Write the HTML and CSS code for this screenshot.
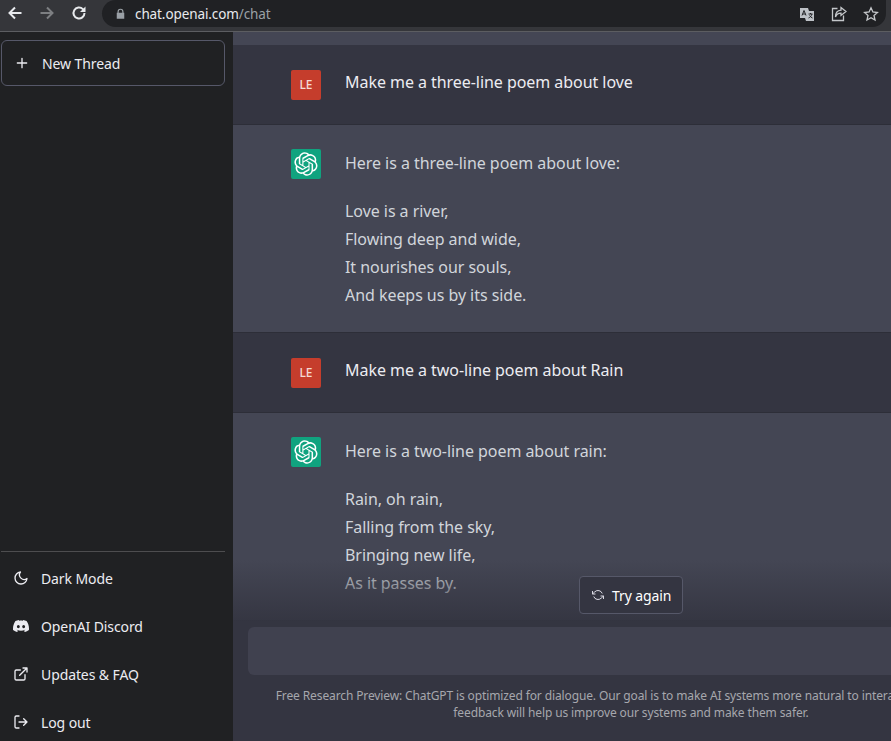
FILE: index.html
```html
<!doctype html>
<html>
	<head>
		<meta charset="utf-8" />
		<title>chat.openai.com/chat</title>
		<link rel="stylesheet" href="styles.css">
	</head>
	<body>
		<svg class="defs" width="0" height="0">
			<symbol id="gpt" viewBox="0 0 41 41"><path fill="currentColor" d="M37.5324 16.8707C37.9808 15.5241 38.1363 14.0974 37.9886 12.6859C37.8409 11.2744 37.3934 9.91076 36.676 8.68622C35.6126 6.83404 33.9882 5.3676 32.0373 4.4985C30.0864 3.62941 27.9098 3.40259 25.8215 3.85078C24.8796 2.7893 23.7219 1.94125 22.4257 1.36341C21.1295 0.785575 19.7249 0.491269 18.3058 0.500197C16.1708 0.495044 14.0893 1.16803 12.3614 2.42214C10.6335 3.67624 9.34853 5.44666 8.6917 7.47815C7.30085 7.76286 5.98686 8.3414 4.8377 9.17505C3.68854 10.0087 2.73073 11.0782 2.02839 12.312C0.956464 14.1591 0.498905 16.2988 0.721698 18.4228C0.944492 20.5467 1.83612 22.5449 3.268 24.1293C2.81966 25.4759 2.66413 26.9026 2.81182 28.3141C2.95951 29.7256 3.40701 31.0892 4.12437 32.3138C5.18791 34.1659 6.8123 35.6322 8.76321 36.5013C10.7141 37.3704 12.8907 37.5973 14.9789 37.1492C15.9208 38.2107 17.0786 39.0587 18.3747 39.6366C19.6709 40.2144 21.0755 40.5087 22.4946 40.4998C24.6307 40.5054 26.7133 39.8321 28.4418 38.5772C30.1704 37.3223 31.4556 35.5506 32.1119 33.5179C33.5027 33.2332 34.8167 32.6547 35.9659 31.821C37.115 30.9874 38.0728 29.9178 38.7752 28.684C39.8458 26.8371 40.3023 24.6979 40.0789 22.5748C39.8556 20.4517 38.9639 18.4544 37.5324 16.8707ZM22.4978 37.8849C20.7443 37.8874 19.0459 37.2733 17.6994 36.1501C17.7601 36.117 17.8666 36.0586 17.936 36.0161L25.9004 31.4156C26.1003 31.3019 26.2663 31.137 26.3813 30.9378C26.4964 30.7386 26.5563 30.5124 26.5549 30.2825V19.0542L29.9213 20.998C29.9389 21.0068 29.9541 21.0198 29.9656 21.0359C29.977 21.052 29.9842 21.0707 29.9867 21.0902V30.3889C29.9842 32.375 29.1946 34.2791 27.7909 35.6841C26.3872 37.0892 24.4838 37.8806 22.4978 37.8849ZM6.39227 31.0064C5.51397 29.4888 5.19742 27.7107 5.49804 25.9832C5.55718 26.0187 5.66048 26.0818 5.73461 26.1244L13.699 30.7248C13.8975 30.8408 14.1233 30.902 14.3532 30.902C14.583 30.902 14.8088 30.8408 15.0073 30.7248L24.731 25.1103V28.9979C24.7321 29.0177 24.7283 29.0376 24.7199 29.0556C24.7115 29.0736 24.6988 29.0893 24.6829 29.1012L16.6317 33.7497C14.9096 34.7416 12.8643 35.0097 10.9447 34.4954C9.02506 33.9811 7.38785 32.7263 6.39227 31.0064ZM4.29707 13.6194C5.17156 12.0998 6.55279 10.9364 8.19885 10.3327C8.19885 10.4013 8.19491 10.5228 8.19491 10.6071V19.808C8.19351 20.0378 8.25334 20.2638 8.36823 20.4629C8.48312 20.6619 8.64893 20.8267 8.84863 20.9404L18.5723 26.5542L15.206 28.4979C15.1894 28.5089 15.1703 28.5155 15.1505 28.5173C15.1307 28.5191 15.1107 28.516 15.0924 28.5082L7.04046 23.8557C5.32135 22.8601 4.06716 21.2235 3.55289 19.3046C3.03862 17.3858 3.30624 15.3413 4.29707 13.6194ZM31.955 20.0556L22.2312 14.4411L25.5976 12.4981C25.6142 12.4872 25.6333 12.4805 25.6531 12.4787C25.6729 12.4769 25.6928 12.4801 25.7111 12.4879L33.7631 17.1364C34.9967 17.849 36.0017 18.8982 36.6606 20.1613C37.3194 21.4244 37.6047 22.849 37.4832 24.2684C37.3617 25.6878 36.8382 27.0432 35.9743 28.1759C35.1103 29.3086 33.9415 30.1717 32.6047 30.6641C32.6047 30.5947 32.6047 30.4733 32.6047 30.3889V21.188C32.6066 20.9586 32.5474 20.7328 32.4332 20.5338C32.319 20.3348 32.154 20.1698 31.955 20.0556ZM35.3055 15.0128C35.2464 14.9765 35.1431 14.9142 35.069 14.8717L27.1045 10.2712C26.906 10.1554 26.6803 10.0943 26.4504 10.0943C26.2206 10.0943 25.9948 10.1554 25.7963 10.2712L16.0726 15.8858V11.9982C16.0715 11.9783 16.0753 11.9585 16.0837 11.9405C16.0921 11.9225 16.1048 11.9068 16.1207 11.8949L24.1719 7.25025C25.4053 6.53903 26.8158 6.19376 28.2383 6.25482C29.6608 6.31589 31.0364 6.78077 32.2044 7.59508C33.3723 8.40939 34.2842 9.53945 34.8334 10.8531C35.3826 12.1667 35.5464 13.6095 35.3055 15.0128ZM14.2424 21.9419L10.8752 19.9981C10.8576 19.9893 10.8423 19.9763 10.8309 19.9602C10.8195 19.9441 10.8122 19.9254 10.8098 19.9058V10.6071C10.8107 9.18295 11.2173 7.78848 11.9819 6.58696C12.7466 5.38544 13.8377 4.42659 15.1275 3.82264C16.4173 3.21869 17.8524 2.99464 19.2649 3.1767C20.6775 3.35876 22.0089 3.93941 23.1034 4.85067C23.0427 4.88379 22.937 4.94215 22.8668 4.98473L14.9024 9.58517C14.7025 9.69878 14.5366 9.86356 14.4215 10.0626C14.3065 10.2616 14.2466 10.4877 14.2479 10.7175L14.2424 21.9419ZM16.071 17.9991L20.4018 15.4978L24.7325 17.9975V22.9985L20.4018 25.4983L16.071 22.9985V17.9991Z"/></symbol>
		</svg>

		<header class="topbar">
			<svg class="nav-icon" viewBox="0 0 16 16"><path d="M14.5 8H2.500M8 2.500L2.500 8 8 13.500"/></svg>
			<svg class="nav-icon nav-off" viewBox="0 0 16 16"><path d="M1.500 8H13.500M8 2.500L13.500 8 8 13.500"/></svg>
			<svg class="nav-icon" viewBox="0 0 16 16"><path d="M13.500 8a5.500 5.500 0 1 1-1.600-3.900L13.500 5.700"/><path class="fill" d="M14.500 1.500v5.500H9z"/></svg>
			<div class="omnibox">
				<svg class="lock" viewBox="0 0 12 14"><path d="M2 6V4.500a4 4 0 0 1 8 0V6h1v8H1V6zM3.600 6h4.800V4.500a2.400 2.400 0 0 0-4.800 0z"/></svg>
				<span class="url">chat.openai.com<span class="url-path">/chat</span></span>
				<div class="omni-tools">
					<svg class="tool" viewBox="0 0 16 16"><path class="tool-fill" d="M1 2h8l1 3h5v10H7l-1-3H1z"/><path class="tool-dark" d="M3 9.500l2-5 2 5M3.800 8h2.400M9.500 8h4M11.500 7v1M13 8c-.6 2-2 3.500-3.500 4M10.500 9.500c.8 1.200 1.800 2 3 2.500"/></svg>
					<svg class="tool" viewBox="0 0 16 16"><path class="tool-line" d="M6.500 2.500H1.500v12h11v-5"/><path class="tool-line" d="M10 1.500l5 4-5 4V7.200C7.500 7.200 5.500 8.300 4.500 11c0-4 2-6.500 5.500-6.800z"/></svg>
					<svg class="tool" viewBox="0 0 16 16"><path class="tool-star" d="M8 1.800l1.900 4.200 4.500.5-3.400 3 1 4.500L8 11.700 4 14l1-4.500-3.400-3 4.500-.5z"/></svg>
				</div>
			</div>
		</header>

		<div class="layout">
			<aside class="sidebar">
				<a class="new-thread">
					<svg class="side-icon plus" viewBox="0 0 24 24"><path d="M12 5v14M5 12h14"/></svg>
					New Thread
				</a>
				<div class="side-bottom">
					<a class="side-item">
						<svg class="side-icon" viewBox="0 0 24 24"><path d="M21 12.800A9 9 0 1 1 11.200 3a7 7 0 0 0 9.800 9.800z"/></svg>
						Dark Mode
					</a>
					<a class="side-item">
						<svg class="side-icon discord" viewBox="0 0 24 24"><path d="M20.317 4.3698a19.7913 19.7913 0 00-4.8851-1.5152.0741.0741 0 00-.0785.0371c-.211.3753-.4447.8648-.6083 1.2495-1.8447-.2762-3.68-.2762-5.4868 0-.1636-.3933-.4058-.8742-.6177-1.2495a.077.077 0 00-.0785-.037 19.7363 19.7363 0 00-4.8852 1.515.0699.0699 0 00-.0321.0277C.5334 9.0458-.319 13.5799.0992 18.0578a.0824.0824 0 00.0312.0561c2.0528 1.5076 4.0413 2.4228 5.9929 3.0294a.0777.0777 0 00.0842-.0276c.4616-.6304.8731-1.2952 1.226-1.9942a.076.076 0 00-.0416-.1057c-.6528-.2476-1.2743-.5495-1.8722-.8923a.077.077 0 01-.0076-.1277c.1258-.0943.2517-.1923.3718-.2914a.0743.0743 0 01.0776-.0105c3.9278 1.7933 8.18 1.7933 12.0614 0a.0739.0739 0 01.0785.0095c.1202.099.246.1981.3728.2924a.077.077 0 01-.0066.1276 12.2986 12.2986 0 01-1.873.8914.0766.0766 0 00-.0407.1067c.3604.698.7719 1.3628 1.225 1.9932a.076.076 0 00.0842.0286c1.961-.6067 3.9495-1.5219 6.0023-3.0294a.077.077 0 00.0313-.0552c.5004-5.177-.8382-9.6739-3.5485-13.6604a.061.061 0 00-.0312-.0286zM8.02 15.3312c-1.1825 0-2.1569-1.0857-2.1569-2.419 0-1.3332.9555-2.4189 2.157-2.4189 1.2108 0 2.1757 1.0952 2.1568 2.419 0 1.3332-.9555 2.4189-2.1569 2.4189zm7.9748 0c-1.1825 0-2.1569-1.0857-2.1569-2.419 0-1.3332.9554-2.4189 2.1569-2.4189 1.2108 0 2.1757 1.0952 2.1568 2.419 0 1.3332-.946 2.4189-2.1568 2.4189Z"/></svg>
						OpenAI Discord
					</a>
					<a class="side-item">
						<svg class="side-icon" viewBox="0 0 24 24"><path d="M18 13v6a2 2 0 0 1-2 2H5a2 2 0 0 1-2-2V8a2 2 0 0 1 2-2h6M15 3h6v6M10 14L21 3"/></svg>
						Updates &amp; FAQ
					</a>
					<a class="side-item">
						<svg class="side-icon" viewBox="0 0 24 24"><path d="M9 21H5a2 2 0 0 1-2-2V5a2 2 0 0 1 2-2h4M16 17l5-5-5-5M21 12H9"/></svg>
						Log out
					</a>
				</div>
			</aside>

			<main class="main">
				<div class="thread">
					<div class="strip"></div>
					<div class="row row-user">
						<div class="avatar avatar-user">LE</div>
						<div class="msg">Make me a three-line poem about love</div>
					</div>
					<div class="row row-bot">
						<div class="avatar avatar-bot"><svg class="gpt"><use href="#gpt"/></svg></div>
						<div class="msg">
							<p>Here is a three-line poem about love:</p>
							<p>Love is a river,<br>Flowing deep and wide,<br>It nourishes our souls,<br>And keeps us by its side.</p>
						</div>
					</div>
					<div class="row row-user">
						<div class="avatar avatar-user">LE</div>
						<div class="msg">Make me a two-line poem about Rain</div>
					</div>
					<div class="row row-bot">
						<div class="avatar avatar-bot"><svg class="gpt"><use href="#gpt"/></svg></div>
						<div class="msg">
							<p>Here is a two-line poem about rain:</p>
							<p>Rain, oh rain,<br>Falling from the sky,<br>Bringing new life,<br>As it passes by.</p>
						</div>
					</div>
				</div>

				<div class="composer">
					<button class="try-again">
						<svg class="retry" viewBox="0 0 24 24"><path d="M1 4v6h6M23 20v-6h-6"/><path d="M20.490 9A9 9 0 0 0 5.640 5.640L1 10m22 4l-4.640 4.360A9 9 0 0 1 3.510 15"/></svg>
						Try again
					</button>
					<div class="input"></div>
					<p class="note">Free Research Preview: ChatGPT is optimized for dialogue. Our goal is to make AI systems more natural to interact with, and your feedback will help us improve our systems and make them safer.</p>
				</div>
			</main>
		</div>
	</body>
</html>
```

FILE: styles.css
```css
html, body, p { margin: 0; padding: 0; }
html, body { height: 100%; overflow: hidden; }
body { display: flex; flex-direction: column; font-family: "Noto Sans", "Noto Sans CJK KR", sans-serif; background: #343541; }
.defs { position: absolute; }

/* browser chrome */
.topbar { display: flex; align-items: flex-start; gap: 16px; flex: none; height: 31px; padding-left: 7px; background: #35363a; border-bottom: 1px solid #5c5d61; }
.nav-icon { flex: none; width: 16px; height: 16px; margin-top: 5px; fill: none; stroke: #e8eaed; stroke-width: 2; }
.nav-icon .fill { fill: #e8eaed; stroke: none; }
.nav-off { stroke: #7d7f82; }
.omnibox { display: flex; align-items: center; flex: 1; height: 27px; margin: 0 5px 0 -1px; padding-left: 14px; background: #202124; border-radius: 14px 0 14px 14px; }
.lock { width: 9px; height: 11px; fill: #9aa0a6; }
.url { margin-left: 10px; font-size: 13.5px; letter-spacing: -0.1px; color: #e8eaed; }
.url-path { color: #9aa0a6; }
.omni-tools { display: flex; gap: 16px; margin-left: auto; margin-right: 7px; }
.tool { width: 16px; height: 16px; }
.tool-fill { fill: #bdc1c6; }
.tool-dark { fill: none; stroke: #202124; stroke-width: 1; }
.tool-line, .tool-star { fill: none; stroke: #c4c7ca; stroke-width: 1.3; }

/* page */
.layout { display: flex; flex: 1; min-height: 0; }
.sidebar { display: flex; flex-direction: column; flex: none; width: 233px; padding: 8px 8px 0 1px; box-sizing: border-box; background: #202123; color: #ececf1; font-size: 14px; letter-spacing: -0.1px; }
.new-thread { display: flex; align-items: center; height: 46px; padding-left: 12px; box-sizing: border-box; border: 1px solid #565869; border-radius: 6px; }
.side-icon { flex: none; width: 16px; height: 16px; margin-right: 12px; fill: none; stroke: currentColor; stroke-width: 2; stroke-linecap: round; stroke-linejoin: round; }
.discord { fill: currentColor; stroke: none; }
/* the last item runs past the bottom of the window */
.side-bottom { flex: none; margin: auto 0 -5px; padding-top: 2px; border-top: 1px solid #4d4d4f; }
.side-item { display: flex; align-items: center; height: 48px; padding-left: 12px; }

.main { position: relative; flex: 1; min-width: 0; overflow: hidden; background: #343541; }
.strip { height: 13px; background: #444654; }
.row { display: flex; gap: 24px; padding-left: 58px; border-bottom: 1px solid #2d2e38; font-size: 16px; line-height: 28px; letter-spacing: -0.05px; }
.row-user { padding-top: 25px; padding-bottom: 24px; background: #343541; color: #ececf1; }
.row-user .msg { line-height: 24px; }
.row-bot { padding-top: 24px; padding-bottom: 23px; background: #444654; color: #d1d5db; }
.msg p + p { margin-top: 20px; }
.avatar { display: flex; align-items: center; justify-content: center; flex: none; width: 30px; height: 30px; border-radius: 2px; }
.avatar-user { background: #c53d2c; color: #f5d9d4; font-size: 12px; font-weight: 500; line-height: 1; letter-spacing: 0; }
.avatar-bot { background: #10a37f; color: #fff; }
.gpt { width: 24px; height: 24px; }

/* bottom fade, sits over the thread */
.composer { position: absolute; left: 0; bottom: 0; width: 796px; height: 181px; background: linear-gradient(to bottom, rgba(52, 53, 65, 0), #343541 36%); }
.try-again { display: flex; align-items: center; position: absolute; left: 346px; top: 16px; width: 104px; height: 38px; padding: 0 0 0 12px; background: #343541; border: 1px solid #565869; border-radius: 4px; color: #fff; font: 14px "Noto Sans", sans-serif; letter-spacing: -0.1px; }
.retry { width: 12px; height: 12px; margin-right: 8px; fill: none; stroke: #d9d9e3; stroke-width: 2; }
.input { position: absolute; left: 15px; top: 67px; width: 766px; height: 48px; background: #40414f; border-radius: 6px; }
.note { position: absolute; left: 30px; top: 127px; width: 736px; text-align: center; font-size: 12px; line-height: 17px; letter-spacing: -0.12px; color: #a6a7ad; }
```
